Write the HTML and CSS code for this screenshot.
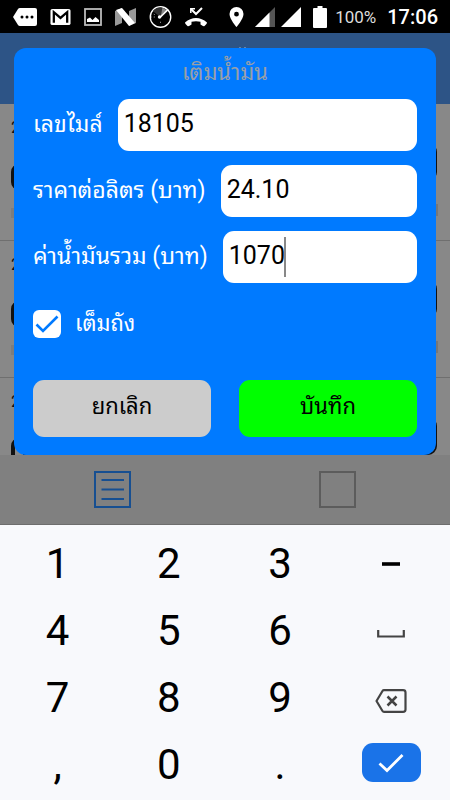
FILE: index.html
```html
<!DOCTYPE html>
<html lang="th">
<head>
<meta charset="utf-8">
<meta name="viewport" content="width=device-width, initial-scale=1">
<title>เติมน้ำมัน</title>
<link rel="stylesheet" href="styles.css">
</head>
<body>
<header class="status">
  <div class="status-left">
    <svg width="24" height="20" viewBox="0 0 24 20"><path d="M7 1H22Q24 1 24 3V17Q24 19 22 19H7Q5.600 19 5 18L0 10L5 2Q5.600 1 7 1Z" fill="#fff"/><g fill="#000"><circle cx="9" cy="10" r="1.500"/><circle cx="14" cy="10" r="1.500"/><circle cx="19" cy="10" r="1.500"/></g></svg>
    <svg width="21" height="18" viewBox="0 0 22 18"><rect x=".5" y=".5" width="21" height="17" rx="2" fill="#fff"/><path d="M4 15V4L11 10L18 4V15" fill="none" stroke="#000" stroke-width="2.400"/></svg>
    <svg width="18" height="18" viewBox="0 0 18 18"><rect x="1" y="1" width="16" height="16" fill="none" stroke="#bbb" stroke-width="1.800"/><path d="M3 14V11L6 9.500L8.500 12L11.500 9L15 12V14Z" fill="#fff"/></svg>
    <svg width="21" height="18" viewBox="0 0 21 18"><path d="M0 3L7 0V15L0 18ZM14 3L21 0V15L14 18Z" fill="#999"/><path d="M1 2L7 0L20 15L14 18Z" fill="#fff"/></svg>
    <svg width="23" height="24" viewBox="0 0 24 24"><circle cx="12" cy="12" r="10.700" fill="#000" stroke="#fff" stroke-width="1.400"/><path d="M12 12L14 2A10 10 0 0 0 4 6Z" fill="#333"/><path d="M12 12L14 2L19 5Z" fill="#888"/><path d="M12 12L20 4" stroke="#fff" stroke-width="1.600"/><circle cx="11" cy="12" r="1.800" fill="#fff"/><path d="M2 12H8M12 17V20M5 9L7 10" stroke="#bbb" stroke-dasharray="1 2"/></svg>
    <svg width="22" height="20" viewBox="0 0 22 20"><path d="M6 2L11 7L17 1" fill="none" stroke="#fff" stroke-width="2"/><path d="M5.800 6V1.800H10" fill="none" stroke="#fff" stroke-width="1.500"/><path d="M0 15.500Q5 11 11 11T22 15.500Q22 16.500 21 17.500L19.500 19Q18.500 19.500 17.500 18.700L15.500 17.500V14.800Q11 13.500 6.500 14.800V17.500L4.500 18.700Q3.500 19.500 2.500 19L1 17.500Q0 16.500 0 15.500Z" fill="#fff"/></svg>
  </div>
  <div class="status-right">
    <svg class="pin" width="15" height="20" viewBox="0 0 15 20"><path fill-rule="evenodd" d="M7.500 0A7 7 0 0 0 .5 7C.5 12 7.500 20 7.500 20S14.500 12 14.500 7A7 7 0 0 0 7.500 0ZM7.500 4.800A2.400 2.400 0 1 1 7.500 9.600A2.400 2.400 0 1 1 7.500 4.800Z" fill="#fff"/></svg>
    <svg width="20" height="20" viewBox="0 0 20 20"><path d="M0 20L20 0V20Z" fill="#555"/><path d="M0 20L14.500 5.500V20Z" fill="#fff"/></svg>
    <svg width="20" height="20" viewBox="0 0 20 20"><path d="M0 20L20 0V20Z" fill="#fff"/></svg>
    <svg class="battery" width="14" height="22" viewBox="0 0 14 22"><path d="M4.500 0H9.500V2H13Q14 2 14 3V21Q14 22 13 22H1Q0 22 0 21V3Q0 2 1 2H4.500Z" fill="#fff"/></svg>
    <span class="percent">100%</span>
    <time class="clock">17:06</time>
  </div>
</header>

<main class="stage">
  <div class="backdrop" aria-hidden="true">
    <div class="appbar"><i class="appbar-mark"></i></div>
    <div class="entry"><span class="entry-date">2</span><div class="entry-row"><i class="entry-value"></i><i class="entry-box"></i></div><div class="entry-row"><i class="entry-note"></i><i class="entry-unit"></i></div></div>
    <div class="entry"><span class="entry-date">2</span><div class="entry-row"><i class="entry-value"></i><i class="entry-box"></i></div><div class="entry-row"><i class="entry-note"></i><i class="entry-unit"></i></div></div>
    <div class="entry"><span class="entry-date">2</span><div class="entry-row"><i class="entry-value"></i><i class="entry-box"></i></div><div class="entry-row"><i class="entry-note"></i><i class="entry-unit"></i></div></div>
  </div>
  <form class="dialog">
    <h1 class="title">เติมน้ำมัน</h1>
    <div class="field">
      <label for="mileage">เลขไมล์</label>
      <div class="box"><input id="mileage" type="text" inputmode="decimal" value="18105"></div>
    </div>
    <div class="field">
      <label for="price">ราคาต่อลิตร (บาท)</label>
      <div class="box"><input id="price" type="text" inputmode="decimal" value="24.10"></div>
    </div>
    <div class="field">
      <label for="total">ค่าน้ำมันรวม (บาท)</label>
      <div class="box"><input id="total" type="text" inputmode="decimal" value="1070"><i class="caret"></i></div>
    </div>
    <div class="full">
      <span class="tick">
        <input id="full" type="checkbox" checked>
        <svg width="24" height="18" viewBox="0 0 24 18"><path d="M1.500 9.500L8 16L22.500 1.500" fill="none" stroke="#007aff" stroke-width="2.600"/></svg>
      </span>
      <label for="full">เต็มถัง</label>
    </div>
    <div class="actions">
      <button class="cancel" type="button">ยกเลิก</button>
      <button class="save" type="button">บันทึก</button>
    </div>
  </form>
</main>

<nav class="tabs">
  <button type="button" aria-label="รายการ"><svg width="38" height="38" viewBox="0 0 38 38" fill="none" stroke="#174f91" stroke-width="2"><rect x="1" y="1" width="35" height="35"/><path d="M7.500 9H30M7.500 18.500H30M7.500 28H30"/></svg></button>
  <button type="button" aria-label="อื่นๆ"><svg width="38" height="38" viewBox="0 0 38 38" fill="none" stroke="#5c5c5c" stroke-width="2"><rect x="1" y="1" width="35" height="35"/></svg></button>
</nav>

<section class="keys">
  <button type="button">1</button>
  <button type="button">2</button>
  <button type="button">3</button>
  <button type="button" aria-label="−"><svg width="18" height="4" viewBox="0 0 18 4"><path d="M0 2H18" stroke="#000" stroke-width="3.600"/></svg></button>
  <button type="button">4</button>
  <button type="button">5</button>
  <button type="button">6</button>
  <button type="button" class="low" aria-label="เว้นวรรค"><svg width="28" height="8" viewBox="0 0 28 8"><path d="M1.200 0V6.500H26.800V0" fill="none" stroke="#444" stroke-width="2.200"/></svg></button>
  <button type="button">7</button>
  <button type="button">8</button>
  <button type="button">9</button>
  <button type="button" class="low" aria-label="ลบ"><svg width="32" height="24" viewBox="0 0 32 24" fill="none" stroke="#444" stroke-width="2.200" stroke-linejoin="round"><path d="M9 1.200H28Q30.500 1.200 30.500 3.500V20.500Q30.500 22.800 28 22.800H9Q8 22.800 7.500 22L1.500 12L7.500 2Q8 1.200 9 1.200Z"/><path d="M12.500 7.500L21.500 16.500M21.500 7.500L12.500 16.500" stroke-width="2.500"/></svg></button>
  <button type="button">,</button>
  <button type="button">0</button>
  <button type="button">.</button>
  <button type="button" class="high" aria-label="ตกลง"><span class="enter"><svg width="26" height="20" viewBox="0 0 26 20"><path d="M1.500 10.500L9 17.500L24.500 2" fill="none" stroke="#fff" stroke-width="2.800"/></svg></span></button>
</section>
</body>
</html>
```
FILE: styles.css
```css
* { box-sizing: border-box; }

body {
  margin: 0;
  min-height: 100vh;
  display: flex;
  flex-direction: column;
  background: #f8f9fc;
  font-family: Roboto, "Noto Sans Thai Looped", "Liberation Sans", sans-serif;
}

button { border: 0; padding: 0; background: none; font: inherit; color: inherit; }
svg { display: block; flex: none; }

.status {
  display: flex;
  justify-content: space-between;
  align-items: center;
  height: 33px;
  padding: 0 12px 0 13px;
  background: #000;
  color: #fff;
}
.status-left { display: flex; align-items: center; gap: 13px; }
.status-right { display: flex; align-items: center; gap: 6px; }
.pin { margin-right: 5px; }
.battery { margin: 0 2px 0 6px; }
.percent { font-size: 17px; color: #ddd; }
.clock { margin-left: 5px; font-size: 20px; font-weight: 500; }

.stage { position: relative; padding: 15px 14px 0; }
.backdrop { position: absolute; inset: 0; overflow: hidden; background: #888; }
.appbar { position: relative; height: 71px; background: #2d5486; }
.appbar-mark {
  position: absolute;
  top: 14px;
  left: 53%;
  width: 7px;
  height: 2px;
  border: solid #6b84a4;
  border-width: 0 2px;
}
.entry {
  display: flex;
  flex-direction: column;
  height: 137px;
  padding: 14px 12px 0 11px;
  border-bottom: 1px solid #6f6f6f;
}
.entry-date { font-size: 16px; line-height: 20px; color: #111; }
.entry-row { display: flex; justify-content: space-between; }
.entry-value {
  width: 16px;
  height: 26px;
  margin-top: 26px;
  border: 4px solid #111;
  border-radius: 8px;
}
.entry-box {
  width: 90px;
  height: 38px;
  margin: 5px 1px 0 0;
  border: 2px solid #111;
  border-radius: 9px;
}
.entry-note { width: 20px; height: 10px; margin-top: 18px; background: #7d7d7d; }
.entry-unit { width: 12px; height: 12px; margin-top: 14px; border: 2px solid #777; border-bottom: 0; }

.dialog {
  position: relative;
  display: flex;
  flex-direction: column;
  padding: 9px 19px 18px;
  border-radius: 12px;
  background: #007aff;
  color: #fff;
  font-size: 22px;
  line-height: 28px;
}
.title {
  margin: 0 0 10px;
  font-size: 22px;
  font-weight: 400;
  line-height: 32px;
  text-align: center;
  color: #999fa8;
}
.field { display: flex; align-items: center; gap: 15px; margin-bottom: 14px; }
.field label { font-size: 23px; white-space: nowrap; }
.box { position: relative; flex: 1; min-width: 0; }
.box input {
  display: block;
  width: 100%;
  height: 52px;
  padding: 0 6px 4px;
  border: 0;
  border-radius: 11px;
  outline: 0;
  background: #fff;
  color: #000;
  font: 25px Roboto, sans-serif;
}
.caret { position: absolute; left: 61px; top: 6px; width: 2px; height: 40px; background: #888; }

.full { display: flex; align-items: center; gap: 14px; margin: 13px 0 42px; }
.tick { position: relative; width: 28px; height: 28px; }
.tick input {
  appearance: none;
  display: block;
  width: 28px;
  height: 28px;
  margin: 0;
  border-radius: 6px;
  background: #fff;
}
.tick svg { position: absolute; left: 2px; top: 5px; pointer-events: none; }

.actions { display: flex; gap: 28px; }
.actions button { flex: 1; height: 57px; padding-bottom: 4px; border-radius: 11px; color: #000; }
.actions .cancel { background: #ccc; }
.actions .save { background: #0f0; }

.tabs {
  display: flex;
  height: 70px;
  background: #808080;
  border-bottom: 1px solid #6d6d6d;
}
.tabs button { flex: 1; display: flex; align-items: center; justify-content: center; }

.keys {
  flex: 1;
  display: grid;
  grid-template-columns: repeat(4, 1fr);
  grid-auto-rows: 67px;
  padding: 5px 3px 0 2px;
  color: #000;
  font-size: 42px;
}
.keys button { display: flex; align-items: center; justify-content: center; }
.keys .low { padding-top: 6px; }
.keys .high { padding-bottom: 4px; }
.enter {
  display: flex;
  align-items: center;
  justify-content: center;
  width: 59px;
  height: 39px;
  border-radius: 11px;
  background: #1a73e8;
}
```
